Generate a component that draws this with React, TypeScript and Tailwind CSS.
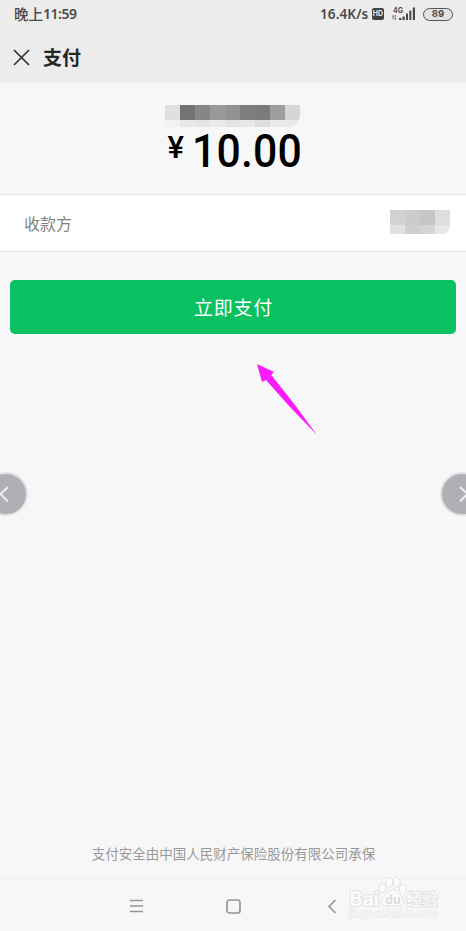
const cjk = 'font-["Noto_Sans","Noto_Sans_CJK_SC",sans-serif]'

const nameTop = ["bg-[#e0e0e0]", "bg-[#737373]", "bg-[#868686]", "bg-[#999999]", "bg-[#929292]", "bg-[#7d7d7d]", "bg-[#7b7b7b]", "bg-[#9e9e9e]", "bg-[#d6d6d6]"]
const nameBottom = ["bg-[#f3f3f3]", "bg-[#e8e8e8]", "bg-[#e5e5e5]", "bg-[#eaeaea]", "bg-[#e3e3e3]", "bg-[#e7e7e7]", "bg-[#dddddd]", "bg-[#ebebeb]", "bg-[#e9e9e9]"]
const payeeTop = ["bg-[#d2d2d2]", "bg-[#cccccc]", "bg-[#c6c6c6]", "bg-[#dedede]"]
const payeeBottom = ["bg-[#e1e1e1]", "bg-[#cfcfcf]", "bg-[#d5d5d5]", "bg-[#e7e7e7]"]

function MosaicRow({ cells, height }: { cells: string[]; height: string }) {
  return (
    <div className="flex">
      {cells.map((cell, i) => (
        <span key={i} className={`w-[15px] ${height} ${cell}`} />
      ))}
    </div>
  )
}

function StatusBar() {
  return (
    <div className="flex h-7 items-center justify-between pl-[14px] pr-[13px] text-[#4a4a4a]">
      <span className="flex items-center font-medium leading-none">
        <span className="w-[29px] whitespace-nowrap text-[14.5px]">晚上</span>
        <span className="font-['Noto_Sans'] text-[14px] font-semibold tracking-[-0.5px]">11:59</span>
      </span>
      <div className="flex items-center">
        <span className="w-[52px] whitespace-nowrap pt-px font-['Noto_Sans'] text-[13.5px] font-semibold leading-none tracking-[0.1px]">16.4K/s</span>
        <span className="flex h-3 w-3 items-center justify-center rounded-[2px] bg-[#424242] font-['Inter'] text-[7px] font-bold text-[#ececec]">HD</span>
        <svg className="ml-[7px] h-4 w-[26px]" viewBox="0 0 26 16">
          <text x="2" y="6.5" fontFamily="Inter" fontSize="7" fontWeight="700" fill="#4a4a4a">4G</text>
          <path d="M2.2 9.5v4M1 10.8l1.2-1.4M4.2 9v4.5M4.2 13.7l1.2-1.4" stroke="#777" strokeWidth="1" fill="none" />
          <path d="M8 12h2.5v2H8zM11.5 10.5h2.2V14h-2.2zM15 7.5h2V14h-2zM18.3 4.5h2V14h-2zM21.8 1.5H24V14h-2.2z" fill="#474747" />
        </svg>
        <span className="ml-[6px] flex h-[13px] w-[30px] items-center justify-center rounded-full border-[1.5px] border-[#555] bg-[#e2e2e2] font-['Inter'] text-[9.5px] font-bold leading-none">89</span>
      </div>
    </div>
  )
}

function Watermark() {
  return (
    <svg className="h-[48px] w-[96px]" viewBox="0 0 96 48" fill="#fbfbfb" stroke="#e2e2e2" strokeWidth="1">
      <g fontWeight="700" paintOrder="stroke">
        <text x="2.5" y="29.5" fontFamily="Inter" fontSize="19.5" strokeWidth="2" textLength="29.5" lengthAdjust="spacingAndGlyphs">Bai</text>
        <text x="59.5" y="29" fontFamily="Noto Sans CJK SC" fontSize="16" fontWeight="500" strokeWidth="2" textLength="31" lengthAdjust="spacingAndGlyphs">经验</text>
      </g>
      <ellipse cx="35.3" cy="12" rx="3.4" ry="4.5" />
      <ellipse cx="42.3" cy="6.4" rx="3.5" ry="4.9" />
      <ellipse cx="49.8" cy="6.4" rx="3.5" ry="4.9" />
      <ellipse cx="55.8" cy="13" rx="3.4" ry="4.5" />
      <path d="M45.5 13.5c-3.5 0-4.5 3.5-7 5.5-3 2.3-4.5 4.5-3.8 7.5 1 3.8 4.3 3.8 7 3.3 2.7-.4 5-.4 7.5 0 3 .5 6.5.5 7.5-3.3.8-3-1-5.2-3.5-7.5-2.7-2.5-4-5.5-7.7-5.5z" />
      <text x="38" y="28" fontFamily="Inter" fontSize="12.5" fontWeight="700" fill="#dcdcdc" stroke="none">du</text>
      <text x="2" y="41" fontFamily="Inter" fontSize="10.5" strokeWidth="1" stroke="#e4e4e4" paintOrder="stroke" textLength="89" lengthAdjust="spacingAndGlyphs">jingyan.baidu.com</text>
    </svg>
  )
}

export default function App() {
  return (
    <div className={`relative flex h-[931px] w-[466px] flex-col overflow-hidden bg-[#f7f7f7] ${cjk}`}>
      <header className="h-[83px] bg-[#ececec]">
        <StatusBar />
        <div className="flex h-[58px] items-center pl-[13px]">
          <svg className="h-[17px] w-[17px]" viewBox="0 0 17 17" stroke="#292929" strokeWidth="1.5">
            <path d="M1 1l15 15M16 1L1 16" />
          </svg>
          <h1 className="ml-[13px] pt-[2px] text-[19px] font-bold leading-none text-[#262626]">支付</h1>
        </div>
      </header>

      <section className="flex h-[112px] flex-col items-center border-b border-[#e5e5e5] pt-[22px]">
        <div className="mr-px overflow-hidden rounded-br-xl">
          <MosaicRow cells={nameTop} height="h-[15px]" />
          <MosaicRow cells={nameBottom} height="h-[7px]" />
        </div>
        <div className="flex h-[48px] w-[135px] items-start whitespace-nowrap pl-[2px] text-black">
          <span className="w-[24px] shrink-0 pt-[5px] font-['Roboto'] text-[31px] font-medium leading-none">¥</span>
          <span className="origin-left scale-x-[0.93] font-['Roboto'] text-[46px] font-medium leading-[48px] tracking-[0.2px]">10.00</span>
        </div>
      </section>

      <section className="flex h-[57px] items-center justify-between border-b border-[#e5e5e5] bg-white pl-6 pr-4">
        <span className="pt-[2px] text-[16px] text-[#808080]">收款方</span>
        <div className="mb-[3px] overflow-hidden rounded-br-lg">
          <MosaicRow cells={payeeTop} height="h-[15px]" />
          <MosaicRow cells={payeeBottom} height="h-[9px]" />
        </div>
      </section>

      <button className="mx-[10px] mt-7 h-[54px] rounded-[5px] bg-[#09c160] pl-px pt-[2px] text-[19px] tracking-[0.7px] text-white">立即支付</button>

      <svg className="absolute left-[257px] top-[364px] h-[72px] w-[61px]" viewBox="0 0 61 72" fill="#fa1bfa">
        <path d="M0 0L17 8L14.3 11L38 41L60 71L33 43L9 16L5 18z" />
      </svg>

      <button className="absolute left-[-16px] top-[472px] flex h-11 w-11 items-center justify-center rounded-full border-2 border-[#e2e2e4] bg-[#afb0b5]">
        <svg className="mr-1 h-[18px] w-[10px]" viewBox="0 0 10 18" fill="none" stroke="#ededee" strokeWidth="2"><path d="M9 2L1.5 9L9 16.5" /></svg>
      </button>
      <button className="absolute left-[440px] top-[472px] flex h-11 w-11 items-center justify-center rounded-full border-2 border-[#e2e2e4] bg-[#afb0b5]">
        <svg className="ml-[3px] h-[18px] w-[10px]" viewBox="0 0 10 18" fill="none" stroke="#ededee" strokeWidth="2"><path d="M1 2L8.5 9L1 16.5" /></svg>
      </button>

      <footer className="mt-auto">
        <p className="mb-[14px] pl-px text-center text-[13.5px] leading-5 text-[#999]">支付安全由中国人民财产保险股份有限公司承保</p>
        <nav className="flex h-[53px] items-center border-t border-[#eeeeee] pl-[130px] pt-[2px] text-[#959595]">
          <svg className="h-[14px] w-[14px]" viewBox="0 0 14 14" stroke="currentColor" strokeWidth="1.5"><path d="M0 1.5h13M0 7h13M0 12.5h13" /></svg>
          <svg className="ml-[82px] h-[15px] w-[15px]" viewBox="0 0 15 15" fill="none" stroke="currentColor" strokeWidth="1.7"><rect x="1" y="1" width="13" height="13" rx="2.5" /></svg>
          <svg className="ml-[86px] h-[15px] w-[10px]" viewBox="0 0 10 15" fill="none" stroke="currentColor" strokeWidth="1.6"><path d="M8.5 1L2 7.5L8.5 14" /></svg>
        </nav>
      </footer>
      <div className="absolute left-[347px] top-[876px]">
        <Watermark />
      </div>
    </div>
  )
}
